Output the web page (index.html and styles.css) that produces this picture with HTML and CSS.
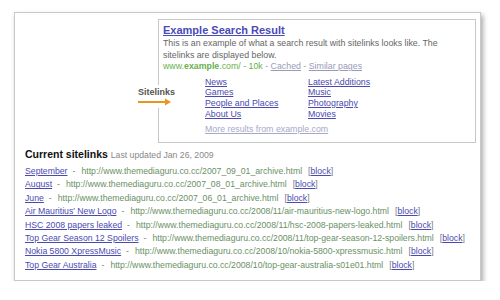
FILE: index.html
```html
<!DOCTYPE html>
<html lang="en">
<head>
    <meta charset="UTF-8">
    <title>Sitelinks</title>
    <link rel="stylesheet" href="styles.css">
</head>
<body>
    <div class="frame">
        <!-- Example result box -->
        <div class="example">
            <a class="title" href="#">Example Search Result</a>
            <p class="desc">This is an example of what a search result with sitelinks looks like. The sitelinks are displayed below.</p>
            <p class="meta"><span class="url">www.<b>example</b>.com/ - 10k</span> - <a href="#">Cached</a> - <a href="#">Similar pages</a></p>
            <div class="links">
                <div class="col">
                    <a href="#">News</a>
                    <a href="#">Games</a>
                    <a href="#">People and Places</a>
                    <a href="#">About Us</a>
                </div>
                <div class="col">
                    <a href="#">Latest Additions</a>
                    <a href="#">Music</a>
                    <a href="#">Photography</a>
                    <a href="#">Movies</a>
                </div>
            </div>
            <a class="more" href="#">More results from example.com</a>

            <div class="label">
                <span>Sitelinks</span>
                <svg width="34" height="8" viewBox="0 0 34 8">
                    <path d="M0 4 H29" stroke="#e8961e" stroke-width="2"/>
                    <path d="M27 0.5 L33 4 L27 7.5 Z" fill="#e8961e"/>
                </svg>
            </div>
        </div>

        <!-- Current sitelinks -->
        <h2 class="heading">Current sitelinks <span>Last updated Jan 26, 2009</span></h2>
        <ul class="list">
            <li><a href="#">September</a><span class="sep">-</span><span class="u">http://www.themediaguru.co.cc/2007_09_01_archive.html</span><span class="blk">[<a href="#">block</a>]</span></li>
            <li><a href="#">August</a><span class="sep">-</span><span class="u">http://www.themediaguru.co.cc/2007_08_01_archive.html</span><span class="blk">[<a href="#">block</a>]</span></li>
            <li><a href="#">June</a><span class="sep">-</span><span class="u">http://www.themediaguru.co.cc/2007_06_01_archive.html</span><span class="blk">[<a href="#">block</a>]</span></li>
            <li><a href="#">Air Mauritius' New Logo</a><span class="sep">-</span><span class="u">http://www.themediaguru.co.cc/2008/11/air-mauritius-new-logo.html</span><span class="blk">[<a href="#">block</a>]</span></li>
            <li><a href="#">HSC 2008 papers leaked</a><span class="sep">-</span><span class="u">http://www.themediaguru.co.cc/2008/11/hsc-2008-papers-leaked.html</span><span class="blk">[<a href="#">block</a>]</span></li>
            <li><a href="#">Top Gear Season 12 Spoilers</a><span class="sep">-</span><span class="u">http://www.themediaguru.co.cc/2008/11/top-gear-season-12-spoilers.html</span><span class="blk">[<a href="#">block</a>]</span></li>
            <li><a href="#">Nokia 5800 XpressMusic</a><span class="sep">-</span><span class="u">http://www.themediaguru.co.cc/2008/10/nokia-5800-xpressmusic.html</span><span class="blk">[<a href="#">block</a>]</span></li>
            <li><a href="#">Top Gear Australia</a><span class="sep">-</span><span class="u">http://www.themediaguru.co.cc/2008/10/top-gear-australia-s01e01.html</span><span class="blk">[<a href="#">block</a>]</span></li>
        </ul>
    </div>
</body>
</html>
```

FILE: styles.css
```css
body {
    margin: 0;
    background: #fff;
    font-family: "Liberation Sans", Arial, sans-serif;
    color: #555;
}
a {
    color: #4a4ab0;
}
.frame {
    margin: 12px 0 0 14px;
    width: 467px;
    height: 269px;
    border: 1px solid #c8c8c8;
    box-shadow: 2px 3px 5px rgba(0, 0, 0, 0.35);
    box-sizing: border-box;
    padding: 6px 0 0 10px;
}
.example {
    position: relative;
    margin-left: 133px;
    width: 318px;
    height: 124px;
    border: 1px solid #c8c8c8;
    box-sizing: border-box;
    padding: 4px 0 0 4px;
    font-size: 8.8px;
}
.title {
    display: block;
    font-size: 11px;
    font-weight: bold;
    line-height: 13px;
    color: #4a4ab8;
}
.desc {
    margin: 1px 0 0;
    max-width: 290px;
    line-height: 11.5px;
    color: #666;
}
.meta {
    margin: 0;
    line-height: 11.5px;
    color: #999;
}
.meta .url {
    color: #6ab04c;
}
.meta a {
    color: #9a9ab8;
}
.links {
    display: flex;
    margin: 4px 0 0 42px;
}
.col {
    display: flex;
    flex-direction: column;
    width: 103px;
    line-height: 10.7px;
}
.more {
    display: block;
    margin: 5px 0 0 42px;
    color: #a8a8c8;
    line-height: 11px;
}
.label {
    position: absolute;
    left: -22px;
    top: 65px;
    width: 40px;
    padding: 2px 0 2px 1px;
    background: #fff;
    display: flex;
    flex-direction: column;
    gap: 1px;
    font-size: 9px;
    font-weight: bold;
    color: #555;
}
.heading {
    margin: 5px 0 0;
    font-size: 10.5px;
    color: #111;
}
.heading span {
    font-size: 8.7px;
    font-weight: normal;
    color: #888;
}
.list {
    list-style: none;
    margin: 5px 0 0;
    padding: 0;
    font-size: 8.7px;
    line-height: 13.4px;
    color: #777;
}
.list .sep {
    margin: 0 6px 0 5px;
}
.list .u {
    color: #6a9066;
}
.list .blk {
    margin-left: 6px;
}
```
